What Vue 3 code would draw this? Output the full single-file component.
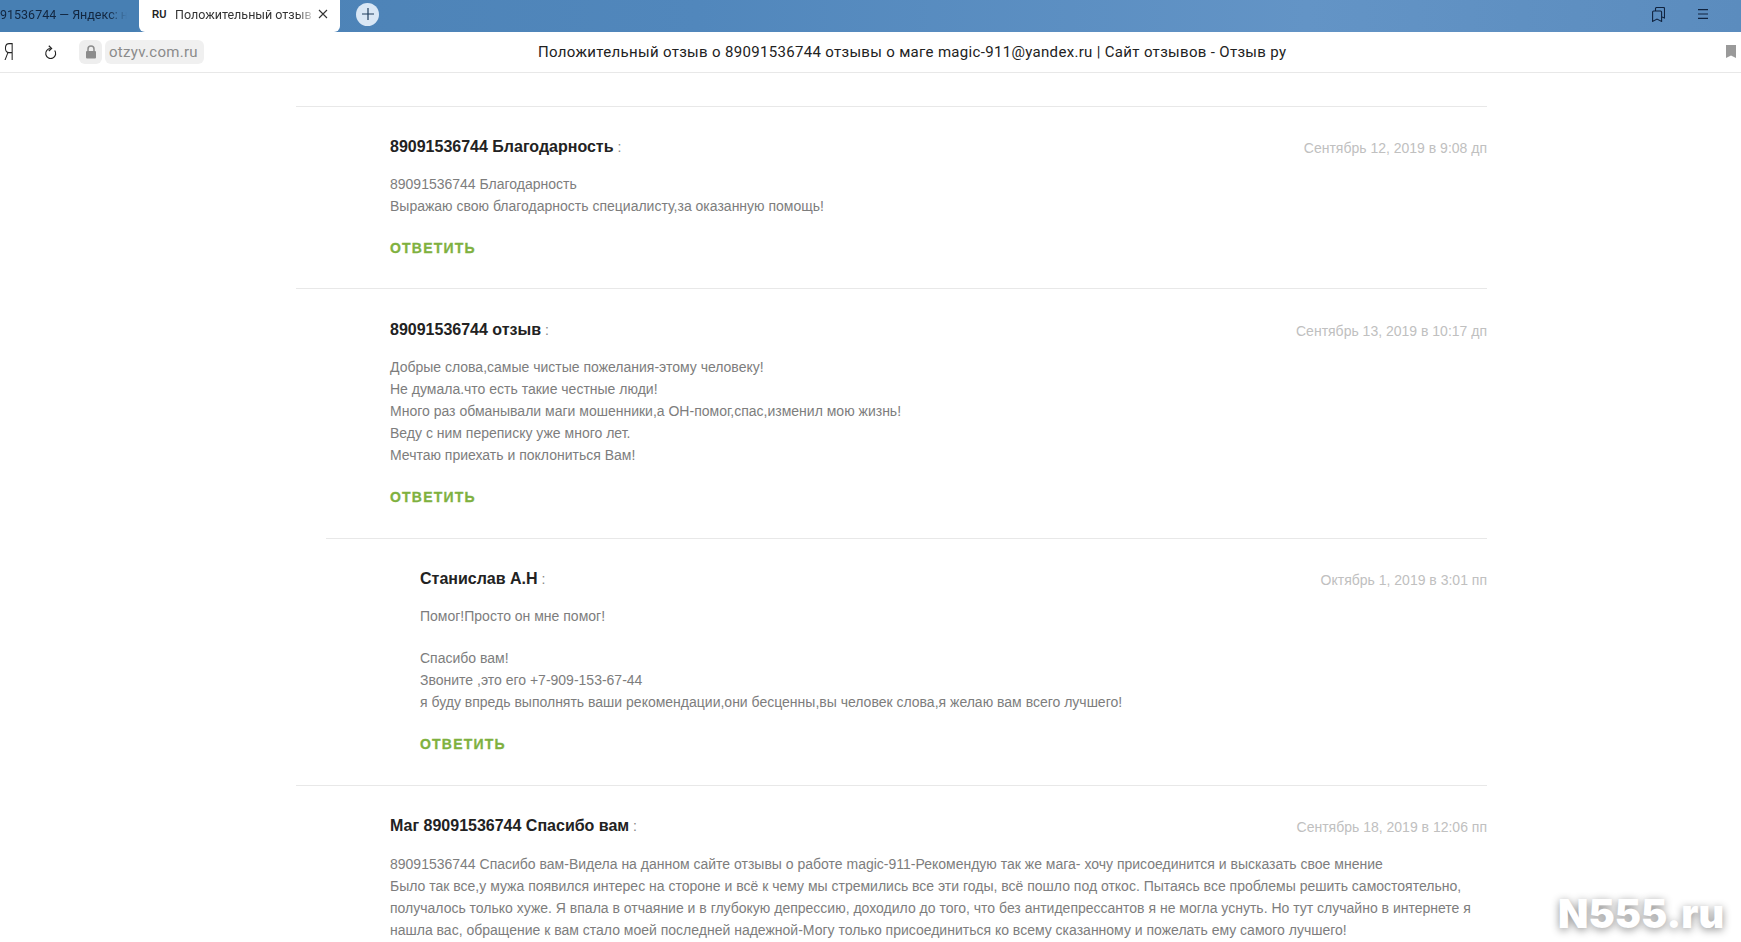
<script setup>
const comments = [
  { name: '89091536744 Благодарность', date: 'Сентябрь 12, 2019 в 9:08 дп', paras: [['89091536744 Благодарность', 'Выражаю свою благодарность специалисту,за оказанную помощь!']] },
  { name: '89091536744 отзыв', date: 'Сентябрь 13, 2019 в 10:17 дп', paras: [['Добрые слова,самые чистые пожелания-этому человеку!', 'Не думала.что есть такие честные люди!', 'Много раз обманывали маги мошенники,а ОН-помог,спас,изменил мою жизнь!', 'Веду с ним переписку уже много лет.', 'Мечтаю приехать и поклониться Вам!']] },
  { nested: true, name: 'Станислав А.Н', date: 'Октябрь 1, 2019 в 3:01 пп', paras: [['Помог!Просто он мне помог!'], ['Спасибо вам!', 'Звоните ,это его +7-909-153-67-44', 'я буду впредь выполнять ваши рекомендации,они бесценны,вы человек слова,я желаю вам всего лучшего!']] },
  { name: 'Маг 89091536744 Спасибо вам', date: 'Сентябрь 18, 2019 в 12:06 пп', last: true, paras: [['89091536744 Спасибо вам-Видела на данном сайте отзывы о работе magic-911-Рекомендую так же мага- хочу присоединится и высказать свое мнение', 'Было так все,у мужа появился интерес на стороне и всё к чему мы стремились все эти годы, всё пошло под откос. Пытаясь все проблемы решить самостоятельно, получалось только хуже. Я впала в отчаяние и в глубокую депрессию, доходило до того, что без антидепрессантов я не могла уснуть. Но тут случайно в интернете я нашла вас, обращение к вам стало моей последней надежной-Могу только присоединиться ко всему сказанному и пожелать ему самого лучшего!']] },
]
</script>

<template>
  <div class="page">
    <div class="tabbar">
      <div class="tab-inactive"><span class="tab-inactive-text">91536744 — Яндекс: н</span></div>
      <div class="tab-active">
        <span class="tab-favicon">RU</span>
        <span class="tab-title">Положительный отзыв</span>
        <svg class="tab-close" width="12" height="12" viewBox="0 0 12 12"><path d="M2 2l8 8M10 2l-8 8" stroke="#333" stroke-width="1.1" fill="none"/></svg>
      </div>
      <div class="new-tab">
        <svg width="14" height="14" viewBox="0 0 14 14"><path d="M7 1v12M1 7h12" stroke="#1f3d5c" stroke-width="1.2" fill="none"/></svg>
      </div>
      <div class="spacer"></div>
      <svg class="bar-icon" width="13" height="15" viewBox="0 0 13 15"><path d="M3.500 4V1.500a1 1 0 0 1 1-1h7a1 1 0 0 1 1 1V11l-2.500-1" stroke="#10233f" stroke-width="1.100" fill="none"/><path d="M.600 5a1 1 0 0 1 1-1h7a1 1 0 0 1 1 1v9.400L5 12l-4.400 2.400z" stroke="#10233f" stroke-width="1.100" fill="none"/></svg>
      <svg class="bar-icon menu-icon" width="10" height="10" viewBox="0 0 10 10"><path d="M0 .600h10M0 5h10M0 9.400h10" stroke="#10233f" stroke-width="1.100" fill="none"/></svg>
    </div>
    <div class="addressbar">
      <span class="ya">Я</span>
      <svg class="reload" width="14" height="15" viewBox="0 0 14 15"><path d="M10.700 5.500A5 5 0 1 1 6.500 3.500" stroke="#222" stroke-width="1.200" fill="none"/><path d="M4.800 .800L7.600 3.500 4.800 6" stroke="#222" stroke-width="1.200" fill="none"/></svg>
      <span class="lock"><svg width="12" height="14" viewBox="0 0 12 14"><path d="M3 6V4a3 3 0 0 1 6 0v2" stroke="#8c8c8c" stroke-width="1.500" fill="none"/><rect x="1" y="6" width="10" height="7.500" rx="1" fill="#8c8c8c"/></svg></span>
      <span class="domain">otzyv.com.ru</span>
      <span class="page-title">Положительный отзыв о 89091536744 отзывы о маге magic-911@yandex.ru | Сайт отзывов - Отзыв ру</span>
      <svg class="bookmark" width="10" height="13" viewBox="0 0 10 13"><path d="M0 0h10v13L5 10.500 0 13z" fill="#9a9a9a"/></svg>
    </div>
    <main class="content">
      <article v-for="c in comments" :key="c.name" class="comment" :class="{ nested: c.nested, last: c.last }">
        <header class="head">
          <div><span class="name">{{ c.name }}</span><span class="colon"> :</span></div>
          <span class="date">{{ c.date }}</span>
        </header>
        <div class="body">
          <p v-for="(p, i) in c.paras" :key="i"><template v-for="(l, j) in p" :key="j">{{ l }}<br v-if="j < p.length - 1"></template></p>
        </div>
        <a v-if="!c.last" class="reply">ОТВЕТИТЬ</a>
      </article>
    </main>
    <div class="watermark">N555.ru</div>
  </div>
</template>

<style scoped>
.page {
  position: relative;
  width: 1741px;
  height: 942px;
  overflow: hidden;
  background: #fff;
  font-family: "Liberation Sans", Arial, sans-serif;
}
.tabbar {
  height: 32px;
  display: flex;
  align-items: center;
  background: linear-gradient(90deg, #4a80b3 0%, #5187bc 40%, #6394c6 75%, #5b8cbe 100%);
}
.tab-inactive {
  width: 139px;
  height: 32px;
  padding-bottom: 4px;
  box-sizing: border-box;
  display: flex;
  align-items: center;
  overflow: hidden;
  background: #477fb3;
  border-bottom-right-radius: 6px;
  flex: none;
}
.tab-inactive-text {
  flex: none;
  font: 12.500px "Roboto", sans-serif;
  color: #12263f;
  width: 127px;
  white-space: nowrap;
  overflow: hidden;
  -webkit-mask-image: linear-gradient(90deg, #000 85%, transparent 100%);
  mask-image: linear-gradient(90deg, #000 85%, transparent 100%);
}
.tab-active {
  width: 201px;
  height: 32px;
  display: flex;
  align-items: center;
  background: #fff;
  border-bottom-left-radius: 6px;
  border-bottom-right-radius: 6px;
  box-sizing: border-box;
  padding: 0 0 4px 13px;
  flex: none;
}
.tab-favicon {
  font: bold 10px "Liberation Sans", sans-serif;
  width: 23px;
  color: #222;
}
.tab-title {
  font: 12.500px "Roboto", sans-serif;
  color: #333;
  width: 136px;
  overflow: hidden;
  white-space: nowrap;
  flex: none;
  -webkit-mask-image: linear-gradient(90deg, #000 90%, rgba(0,0,0,.25) 100%);
  mask-image: linear-gradient(90deg, #000 90%, rgba(0,0,0,.25) 100%);
}
.tab-close { margin-left: 6px; }
.new-tab {
  width: 23px;
  height: 23px;
  margin: 0 0 4px 16px;
  border-radius: 50%;
  background: #d9e7f5;
  display: flex;
  align-items: center;
  justify-content: center;
}
.spacer { flex: 1; }
.bar-icon { flex: none; margin-bottom: 4px; }
.menu-icon { margin-left: 33px; margin-right: 33px; }
.addressbar {
  position: relative;
  height: 40px;
  border-bottom: 1px solid #e8e8e8;
  display: flex;
  align-items: center;
}
.ya {
  font: 300 24px "Roboto", sans-serif;
  color: #222;
  margin-left: 2px;
  width: 12px;
  flex: none;
  transform: scaleX(0.7);
}
.reload { margin-left: 30px; flex: none; }
.lock {
  margin-left: 21px;
  width: 23px;
  height: 24px;
  border-radius: 6px;
  background: #eeeeee;
  display: flex;
  align-items: center;
  justify-content: center;
  flex: none;
}
.domain {
  margin-left: 3px;
  height: 24px;
  padding: 0 6px 0 4px;
  border-radius: 6px;
  background: #f0f0f0;
  font: 15px/24px "Roboto", sans-serif;
  color: #8b8b8b;
  letter-spacing: 0.3px;
}
.page-title {
  position: absolute;
  left: 538px;
  top: 0;
  font: 15px/40px "Roboto", sans-serif;
  letter-spacing: 0.32px;
  color: #222;
  white-space: nowrap;
}
.bookmark { position: absolute; left: 1726px; top: 13px; }
.content {
  margin: 33px 254px 0 296px;
}
.comment {
  border-top: 1px solid #e8e8e8;
  padding: 30px 0 0 94px;
  height: 182px;
  box-sizing: border-box;
}
.comment:nth-child(2) { height: 250px; padding-top: 31px; }
.comment.nested { margin-left: 30px; height: 247px; }
.comment.last { height: 160px; }
.comment.last .body { margin-top: 17px; }
.head {
  display: flex;
  justify-content: space-between;
  align-items: center;
  height: 20px;
}
.name {
  font-size: 16px;
  font-weight: 700;
  color: #222;
}
.colon { font-size: 14px; color: #888; }
.date {
  font-size: 14px;
  color: #c0c0c0;
  position: relative;
  top: 1px;
}
.body {
  margin-top: 16px;
  font-size: 14px;
  line-height: 22px;
  color: #7d7d7d;
}
.body p { margin: 0 0 20px; }
.reply {
  display: block;
  font-size: 14px;
  font-weight: 700;
  letter-spacing: 1.2px;
  -webkit-text-stroke: 0.3px #7fb13f;
  line-height: 22px;
  color: #7fb13f;
}
.watermark {
  position: absolute;
  left: 1558px;
  top: 890px;
  font: 900 39.500px "Inter", "Liberation Sans", sans-serif;
  color: #fff;
  text-shadow: 0 2px 8px rgba(0,0,0,0.45);
  white-space: nowrap;
}
</style>
